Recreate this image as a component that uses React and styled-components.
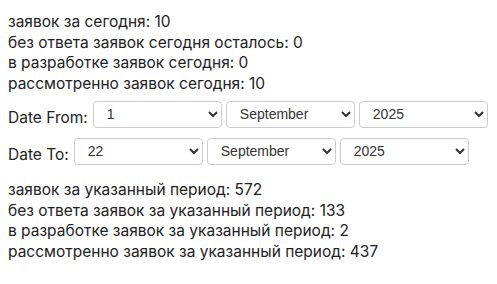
import React, { useState } from 'react'
import styled, { createGlobalStyle } from 'styled-components'

const GlobalStyle = createGlobalStyle`
  body {
    margin: 0;
    background: #fff;
    font-family: Inter, 'Noto Sans', sans-serif;
    color: #222;
  }
`

const Page = styled.div`
  padding: 12px 8px 8px 8px;
  display: flex;
  flex-direction: column;
`

const Stats = styled.div`
  display: flex;
  flex-direction: column;
  font-size: 15.5px;
  line-height: 20.7px;
`

const Line = styled.div``

const DateRow = styled.div`
  display: flex;
  align-items: center;
  gap: 4px;
  margin-top: ${props => props.top}px;
`

const Label = styled.span`
  font-size: 15.5px;
  margin-right: 1px;
  padding-top: 6px;
`

const Select = styled.select`
  width: 129px;
  height: 27px;
  padding: 0 6px 0 9px;
  border: 1px solid #ccc;
  border-radius: 4px;
  background: #fff;
  font-family: 'Liberation Sans', Arial, sans-serif;
  font-size: 14px;
  color: #333;
`

const Bottom = styled(Stats)`
  margin-top: 15px;
`

const months = ['January', 'February', 'March', 'April', 'May', 'June', 'July',
  'August', 'September', 'October', 'November', 'December']
const days = Array.from({ length: 31 }, (_, i) => i + 1)
const years = [2023, 2024, 2025, 2026]

function DatePicker({ label, top, day }) {
  const [d, setD] = useState(day)
  const [m, setM] = useState('September')
  const [y, setY] = useState(2025)
  return (
    <DateRow top={top}>
      <Label>{label}</Label>
      <Select value={d} onChange={e => setD(+e.target.value)}>
        {days.map(x => <option key={x} value={x}>{x}</option>)}
      </Select>
      <Select value={m} onChange={e => setM(e.target.value)}>
        {months.map(x => <option key={x} value={x}>{x}</option>)}
      </Select>
      <Select value={y} onChange={e => setY(+e.target.value)}>
        {years.map(x => <option key={x} value={x}>{x}</option>)}
      </Select>
    </DateRow>
  )
}

export default function App() {
  return (
    <Page>
      <GlobalStyle />
      <Stats>
        <Line>заявок за сегодня: 10</Line>
        <Line>без ответа заявок сегодня осталось: 0</Line>
        <Line>в разработке заявок сегодня: 0</Line>
        <Line>рассмотренно заявок сегодня: 10</Line>
      </Stats>
      <DatePicker label="Date From:" top={6} day={1} />
      <DatePicker label="Date To:" top={10} day={22} />
      <Bottom>
        <Line>заявок за указанный период: 572</Line>
        <Line>без ответа заявок за указанный период: 133</Line>
        <Line>в разработке заявок за указанный период: 2</Line>
        <Line>рассмотренно заявок за указанный период: 437</Line>
      </Bottom>
    </Page>
  )
}
